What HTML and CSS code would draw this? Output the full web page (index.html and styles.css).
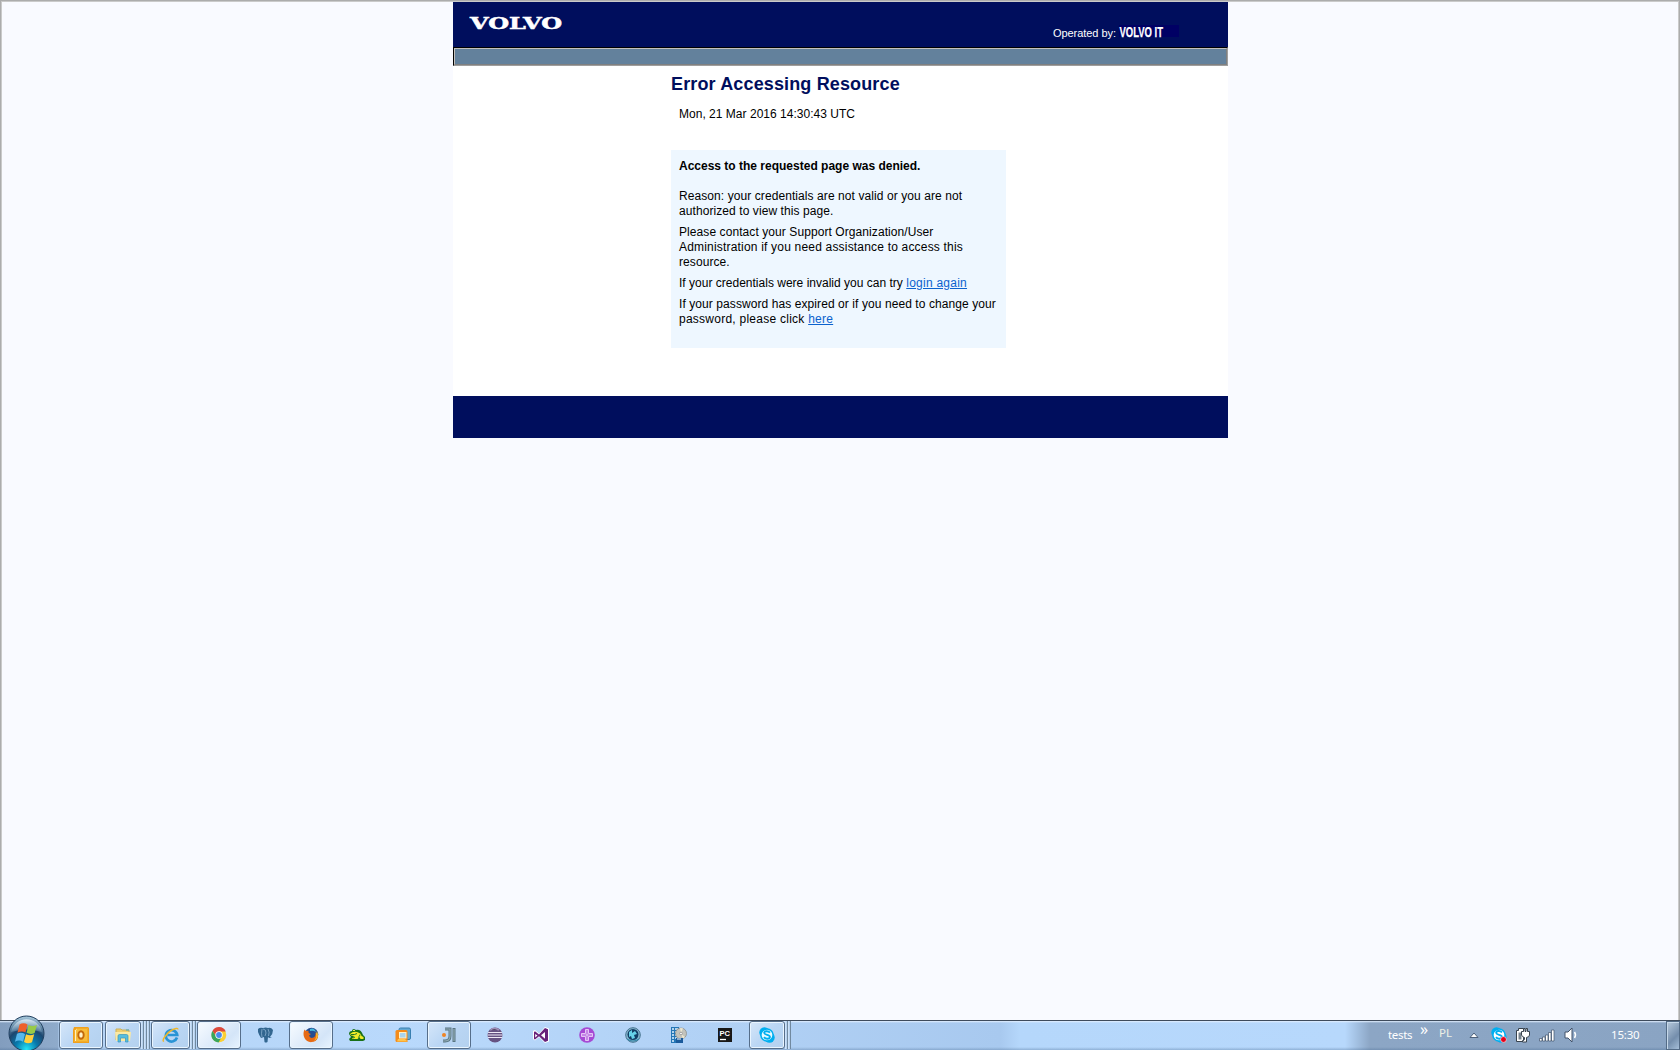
FILE: index.html
```html
<!DOCTYPE html>
<html lang="en">
<head>
<meta charset="utf-8">
<title>Error Accessing Resource</title>
<link rel="stylesheet" href="styles.css">
</head>
<body>
<div class="viewport">
  <div class="page">
    <header class="header">
      <svg class="logo" width="94" height="22" viewBox="0 0 94 22"><text x="1" y="17" textLength="92" lengthAdjust="spacingAndGlyphs">VOLVO</text></svg>
      <div class="operated"><span>Operated by:</span>
        <svg class="volvo-it" width="60" height="12" viewBox="0 0 60 12"><text x="0.5" y="11.500" textLength="43.500" lengthAdjust="spacingAndGlyphs">VOLVO IT</text></svg>
      </div>
    </header>
    <div class="menubar"><div class="menubar-inner"></div></div>
    <main class="content">
      <h1>Error Accessing Resource</h1>
      <div class="date">Mon, 21 Mar 2016 14:30:43 UTC</div>
      <section class="message">
        <h2>Access to the requested page was denied.</h2>
        <p>Reason: your credentials are not valid or you are not<br>authorized to view this page.</p>
        <p>Please contact your Support Organization/User<br><span class="loose">Administration if you need assistance to access this</span><br>resource.</p>
        <p class="tight">If your credentials were invalid you can try <a class="wide" href="#">login again</a></p>
        <p>If your password has expired or if you need to change your<br><span class="wide">password, please click <a href="#">here</a></span></p>
      </section>
    </main>
    <footer class="footer"></footer>
  </div>
</div>
<div class="taskbar">
  <div class="start">
    <svg class="orb" width="38" height="36" viewBox="0 0 38 36">
      <defs>
        <radialGradient id="orb" cx=".5" cy=".95" r=".9"><stop offset="0" stop-color="#25e5f6"/><stop offset=".35" stop-color="#087aad"/><stop offset=".65" stop-color="#1c4770"/><stop offset="1" stop-color="#9fc0d5"/></radialGradient>
        <linearGradient id="gloss" x2="0" y2="1"><stop offset="0" stop-color="#eef7ff" stop-opacity=".8"/><stop offset="1" stop-color="#9bbdd5" stop-opacity=".3"/></linearGradient>
      </defs>
      <circle cx="18.500" cy="18.500" r="17.500" fill="url(#orb)" stroke="#213e5e"/>
      <path d="M3 17a15.800 15.800 0 0 1 31 0q-15-5-31 0z" fill="url(#gloss)"/>
      <path d="M11.500 9.500q4-2.500 8 0l-2 8q-4-2-8 .2z" fill="#ef602b"/>
      <path d="M20.500 10q4 2 8.500 0l-2.400 8q-4 2-8-.2z" fill="#98cb48"/>
      <path d="M9 18.800q4-2 8 .2l-2 7.800q-4-2.500-8 0z" fill="#57b8ed"/>
      <path d="M18 19.200q4 2 8.200 0l-2.200 8q-4 2.200-8-.2z" fill="#ffcf3d"/>
    </svg>
  </div>
  <nav class="apps">
    <div class="slot"><div class="button"><svg class="icon" viewBox="0 0 16 16"><path d="M1 0h14l1 1v15H0V3z" fill="#f0a01d"/><path d="M1.500 3.500L3.500 1.500h11v13h-13z" fill="#fff0bd" stroke="#f2ad2a"/><path d="M4 2h10v12H3V3z" fill="#f8bd3a"/><ellipse cx="8" cy="8" rx="2.700" ry="3.800" fill="#fff2c7" stroke="#c4690a" stroke-width="1.900"/></svg></div></div>
    <div class="slot"><div class="button small"><svg class="icon" viewBox="0 0 16 16"><path d="M1 2h5l1 1h7v10H1z" fill="#efcf70" stroke="#ccb05a"/><path d="M0 5h16l-1 9H1z" fill="#fae9a4"/><path d="M3 15V9q0-1.500 1.500-1.500h7Q13 7.500 13 9v6h-2.500v-4h-5v4z" fill="#58bddd" stroke="#3795bb" stroke-width=".7"/><path d="M11 3h3" stroke="#43a8c9"/></svg></div><i class="stack"></i><i class="stack"></i><i class="stack"></i></div>
    <div class="slot"><div class="button mid"><svg class="icon" viewBox="0 0 16 16"><path d="M14 10.500A5.700 5.700 0 1 1 14.200 8H4.500" fill="none" stroke="#2994d5" stroke-width="2.700"/><path d="M1 14C-2 15 3 6 9 3c3-1.500 6-2.500 6-.5" fill="none" stroke="#efb72a" stroke-width="1.400"/></svg></div><i class="stack"></i><i class="stack"></i></div>
    <div class="slot"><div class="button bright"><svg class="icon" viewBox="0 0 16 16"><circle cx="8" cy="8" r="7.300" fill="#fbcf32"/><path d="M1.400 4A7.500 7.500 0 0 1 14.800 4.500H8L5 9z" fill="#dc493b"/><path d="M1.400 4A7.500 7.500 0 0 0 7.500 15.400L11 9.500 5 9z" fill="#39a65b"/><circle cx="8" cy="8" r="3.700" fill="#fff"/><circle cx="8" cy="8" r="2.900" fill="#498bea"/></svg></div></div>
    <div class="slot"><svg class="icon" viewBox="0 0 16 16"><path d="M1 2q2-2 5-1 3-1 5 0 3-1 5 2 0 4-3 7l2 .5-3 .5-1-1-.5 5q-2 1-3 0L7 10l-3 1Q2 8 1 5z" fill="#326690"/><path d="M5 2q-1 5 0 8m1-8q3 0 3 4L8 9M11 2q2 3 .5 7" stroke="#a8cae6" stroke-width=".6" fill="none"/></svg></div>
    <div class="slot"><div class="button bright"><svg class="icon" viewBox="0 0 16 16"><circle cx="8.500" cy="7.500" r="6.800" fill="#244e91"/><path d="M7 2q4-2 6 3-3-2-6-1z" fill="#45b8dc"/><path d="M1.500 2.500L3 4l2.500-.2Q5 6 6.500 6.500L8 7 6 8.500q1 3.500 4.500 2 2.500-1.500 2-5 3 2 2.500 5A7.400 7.400 0 0 1 1.500 11Q-.5 7 1.500 2.500z" fill="#e66a15"/><path d="M14 4q3 7-3 10 3-4 2-7z" fill="#f9bd2c"/></svg></div></div>
    <div class="slot"><svg class="icon" viewBox="0 0 16 16"><path d="M0 7q0-3 3-3 0-2 2-2l2 1q5-1 7 5l2 2v3l-2 1H1l-1-2 2-2z" fill="#187018"/><path d="M1 7q3-3 7-2 4 1 4.500 4l2 1v2h-3l-1-2-2 2H3l2-3-3-.5z" fill="#f0eb28"/><path d="M2 7.500q4 .5 6-1m3 1q0 2-2 3M6 10l-2 1" fill="none" stroke="#287328"/><path d="M4 3.500h2" stroke="#e8ea50"/></svg></div>
    <div class="slot"><svg class="icon" viewBox="0 0 16 16"><rect x="4" y="1" width="11.500" height="11.500" rx="1.500" fill="#65a9d3" stroke="#397fb0"/><path d="M2 3h9q1.500 0 1.500 1.500V15H2q-1.500 0-1.500-1.500V4.500Q.5 3 2 3z" fill="#f48b19"/><path d="M3 12h7l2.500 2.500H2z" fill="#ffc44c"/><rect x="4.500" y="5.500" width="6.500" height="5.500" fill="#a9d4ee" stroke="#fff1c6"/></svg></div>
    <div class="slot"><div class="button"><svg class="icon" viewBox="0 0 16 16"><path d="M4 2h5v7q0 5-5 5H2M13 1v14" fill="none" stroke="#587582" stroke-width="3"/><path d="M4 2h5v7q0 5-5 5H2M13 2v12" fill="none" stroke="#91aab3" stroke-width="1.200"/><circle cx="3" cy="8" r="2" fill="#ef8424"/></svg></div></div>
    <div class="slot"><svg class="icon" viewBox="0 0 16 16"><defs><clipPath id="disc"><circle cx="8" cy="8" r="7.500"/></clipPath></defs><g clip-path="url(#disc)"><path d="M0 0h16v16H0z" fill="#665282"/><path d="M0 5.500h16M0 8h16M0 10.500h16" stroke="#eee8f5" stroke-width="1.100"/><path d="M3 3q4-3 9 0" stroke="#a08fb9" stroke-width="2"/></g></svg></div>
    <div class="slot"><svg class="icon" viewBox="0 0 16 16"><path d="M0 4l2-1 4 3.500L12 0l4 1.500v13L12 16 6 10l-4 3.500L0 12z" fill="#fff"/><path d="M1 5l1-.7 4 3.200L12 1l3 1.300v11.500L12 15 6 9.200 2 12.500 1 12zm1.200 2v3.500L4.500 8.500zM12 5L8 8.300l4 3.400z" fill="#68217a" fill-rule="evenodd"/></svg></div>
    <div class="slot"><svg class="icon" viewBox="0 0 16 16"><circle cx="8" cy="8" r="7.800" fill="#a64ad4"/><path d="M6.500 2.500h3v4h4v3h-4v4h-3v-4h-4v-3h4zM8 3v10M3 8h10" fill="none" stroke="#f4e4ff" stroke-width=".8"/></svg></div>
    <div class="slot"><svg class="icon" viewBox="0 0 16 16"><circle cx="8" cy="8" r="7.300" fill="#86b8d1" stroke="#46728e"/><circle cx="8" cy="7.500" r="5.500" fill="#123e65"/><path d="M4 5l3-2v3l3-2 2 3-3 1 1 3-3 1-1-3-2 1z" fill="#66d1e8"/><path d="M2 12q6 4 12 0" stroke="#3788a8" stroke-width="1.200" fill="none"/></svg></div>
    <div class="slot"><svg class="icon" viewBox="0 0 16 16"><path d="M0 0h8v16H0z" fill="#2476b5"/><path d="M1 2h2m1 0h3M1 5h2m1 0h3M1 8h2m1 0h3M1 11h2m1 0h3M1 14h2" stroke="#e1f2ff" stroke-width="1.600"/><circle cx="10" cy="6.500" r="5.500" fill="#c3c3bc" stroke="#898983" stroke-width=".7"/><path d="M10 6L9 1l3 .2zM10 7l4 3-2 1.500z" fill="#eee8cf"/><circle cx="10" cy="6.500" r="1.300" fill="#fff" stroke="#777" stroke-width=".6"/><path d="M5 11h7v5H5z" fill="#1a5a9b"/><path d="M6 12h4" stroke="#fff"/></svg></div>
    <div class="slot"><svg class="icon" viewBox="0 0 16 16"><path d="M1 1h14v14H1z" fill="#181818"/><text class="pc" x="2.500" y="8.500" textLength="10.500" lengthAdjust="spacingAndGlyphs">PC</text><path d="M3 12.500h6" stroke="#fff" stroke-width="1.300"/></svg></div>
    <div class="slot"><div class="button small"><svg class="icon" viewBox="0 0 16 16"><circle cx="5.500" cy="5.500" r="5.200" fill="#00aff0"/><circle cx="10.500" cy="10.500" r="5.200" fill="#00aff0"/><circle cx="8" cy="8" r="6.100" fill="#e8faff" stroke="#00aff0" stroke-width="1.500"/><path d="M11 5.600C9 3.500 5 4 5.200 6 5.500 8.500 11 7.300 10.900 10c-.1 2.200-4.300 2.400-5.900.1" fill="none" stroke="#00aff0" stroke-width="1.900"/></svg></div><i class="stack"></i><i class="stack"></i></div>
  </nav>
  <div class="tray">
    <span class="tests">tests</span><span class="more">»</span><span class="lang">PL</span>
    <svg class="tri" width="10" height="6" viewBox="0 0 10 6"><path d="M1 5.500L5 1l4 4.500z" fill="#fff" stroke="#4b607b"/></svg>
    <svg class="tray-icon" viewBox="0 0 16 16"><circle cx="5.500" cy="5.500" r="5.200" fill="#00aff0"/><circle cx="10.500" cy="10.500" r="5.200" fill="#00aff0"/><circle cx="8" cy="8" r="6.100" fill="#fff" stroke="#00aff0" stroke-width="1.500"/><path d="M11 5.300C9 3.200 5 3.700 5.200 6 5.500 8.500 11 7.300 10.900 10c-.1 2.200-4.300 2.400-5.900.1" fill="none" stroke="#00aff0" stroke-width="1.900"/><circle cx="12.500" cy="12.500" r="2.900" fill="#e80018" stroke="#fff" stroke-width=".6"/></svg>
    <svg class="tray-icon" viewBox="0 0 16 16"><path d="M3.500 1.500h5v13h-7v-11h2z" fill="#fff" stroke="#38434e"/><path d="M3.500 5.500h3v7h-3z" fill="#77838e"/><path d="M8.500 1.500v3H6.500V8q.5 2 3 2.500v2q0 1-2 1v1.500h4v-4.500q3-.5 3-2.500V4.500h-2v-3h-1.500v3h-1v-3z" fill="#fff" stroke="#38434e"/></svg>
    <svg class="tray-icon" viewBox="0 0 16 16"><path d="M.5 11.500H3v2.500H.5zM3.500 10H6v4H3.500zM6.500 8H9v6H6.500zM9.500 5.500H12V14H9.500zM12.500 3H15v11h-2.500z" fill="#fff" stroke="#40536c" stroke-width=".7"/></svg>
    <svg class="tray-icon" viewBox="0 0 16 16"><path d="M2 5h3l4-4v14l-4-4H2z" fill="#fff" stroke="#42536a"/><path d="M11.500 5q2 3 0 6" fill="none" stroke="#fff" stroke-width="1.500"/></svg>
    <span class="clock">15:30</span><div class="desktop"></div>
  </div>
</div>
</body>
</html>
```
FILE: styles.css
```css
* { box-sizing: border-box; }
body { margin: 0; width: 1680px; height: 1050px; overflow: hidden; display: flex; flex-direction: column; font: 12px/15px "Liberation Sans", Arial, sans-serif; color: #000; }
.viewport { height: 1020px; flex: none; border: 1px solid #acacac; border-bottom: 0; padding-top: 1px; background: #f9faff; box-shadow: inset 1px 1px #cacaca, inset -1px 0 #cacaca; }
.page { width: 775px; margin-left: 452px; }
.header { height: 45px; padding: 10px 49px 0 16px; background: #000e5d; display: flex; justify-content: space-between; }
.logo text { font: bold 16px "DejaVu Serif", serif; fill: #fff; stroke: #fff; stroke-width: .5px; }
.operated { display: flex; padding-top: 13px; color: #fff; font-size: 11px; }
.operated span { width: 66px; line-height: 15px; padding-top: 1px; letter-spacing: -.06px; white-space: nowrap; }
.volvo-it { background: #000064; overflow: visible; }
.volvo-it text { font: bold 15.5px "Liberation Sans", sans-serif; fill: #fff; stroke: #fff; stroke-width: .25px; }
.menubar { height: 19px; border: 1px solid; border-color: #000 #9e9e9e #9e9e9e #000; }
.menubar-inner { height: 17px; background: #63819c; border: 1px solid; border-color: #c4c0bc #808080 #808080 #c4c0bc; }
.content { height: 330px; padding: 8px 222px 0 218px; background: #fff; }
h1 { margin: 0; font-size: 18px; line-height: 20px; letter-spacing: .14px; color: #000e5d; white-space: nowrap; }
.date { padding: 13px 0 0 8px; letter-spacing: .02px; }
.message { width: 335px; height: 198px; margin-top: 28px; padding: 9px 8px; background: #eef7ff; white-space: nowrap; }
h2 { margin: 0 0 15px; font-size: 12px; line-height: 15px; }
p { margin: 0 0 6px; letter-spacing: .08px; }
a { color: #0b62ce; }
.tight { letter-spacing: .01px; }
.loose { letter-spacing: .19px; }
.wide { letter-spacing: .25px; }
.footer { height: 42px; background: #000e5d; }
.taskbar { height: 30px; display: flex; border-top: 1px solid #3e4b5c; background: linear-gradient(#e2efff 0, transparent 2px, transparent 26px, rgba(70,105,145,.35)), linear-gradient(90deg, #829dbe 0, #8fabcb 58px, #b4d3f5 59px, #b9d9fc 400px, #b0d0f4 760px, #a8c9ef 1000px, #b5d7fb 1020px, #b7d8fc 1345px, #8ca6c5 1370px, #8aa4c3 100%); }
.start { width: 58px; flex: none; padding-left: 8px; }
.orb { display: block; margin-top: -6px; }
.apps { width: 736px; flex: none; display: flex; }
.slot { width: 46px; height: 28px; display: flex; align-items: center; justify-content: center; }
.slot:has(.small), .slot:has(.mid) { justify-content: flex-start; padding-left: 1px; }
.button { width: 44px; height: 28px; display: flex; align-items: center; justify-content: center; border: 1px solid #566e8a; border-radius: 3px; box-shadow: inset 0 0 0 1px #e9f5ff; background: linear-gradient(135deg, #d5e6f9, #bad6f4 50%, #b4d1ef); }
.button.bright { background: linear-gradient(135deg, #f7fbff, #d4e5f8 70%, #e8f4ff); }
.button.small { width: 36px; }
.button.mid { width: 39px; }
.stack { width: 3px; height: 28px; border-right: 1px solid #71899f; background: linear-gradient(90deg, #d9ebff, #aac9e9); }
.icon { width: 16px; height: 16px; display: block; overflow: visible; }
.pc { font: bold 7.5px "Liberation Sans", sans-serif; fill: #fff; }
.tray { flex: 1; height: 28px; display: flex; align-items: center; padding-left: 594px; color: #fff; font-family: "Noto Sans", sans-serif; font-size: 11.5px; white-space: nowrap; }
.tests { width: 32px; flex: none; padding-bottom: 1px; letter-spacing: -.3px; }
.more { width: 19px; flex: none; font-size: 16px; padding-bottom: 12px; }
.lang { width: 30px; flex: none; padding-bottom: 5px; color: #edf0e6; }
.tri { margin-right: 12px; flex: none; }
.tray-icon { width: 16px; height: 16px; margin-right: 8px; flex: none; }
.clock { width: 55px; flex: none; margin-left: 24px; padding-bottom: 1px; letter-spacing: -.2px; }
.desktop { width: 14px; height: 29px; flex: none; margin-left: auto; border: 1px solid #536b86; background: linear-gradient(135deg, #b7c9dc, #748eac 60%, #a5bed8); box-shadow: inset 1px 1px #c6d8e9; }
```
